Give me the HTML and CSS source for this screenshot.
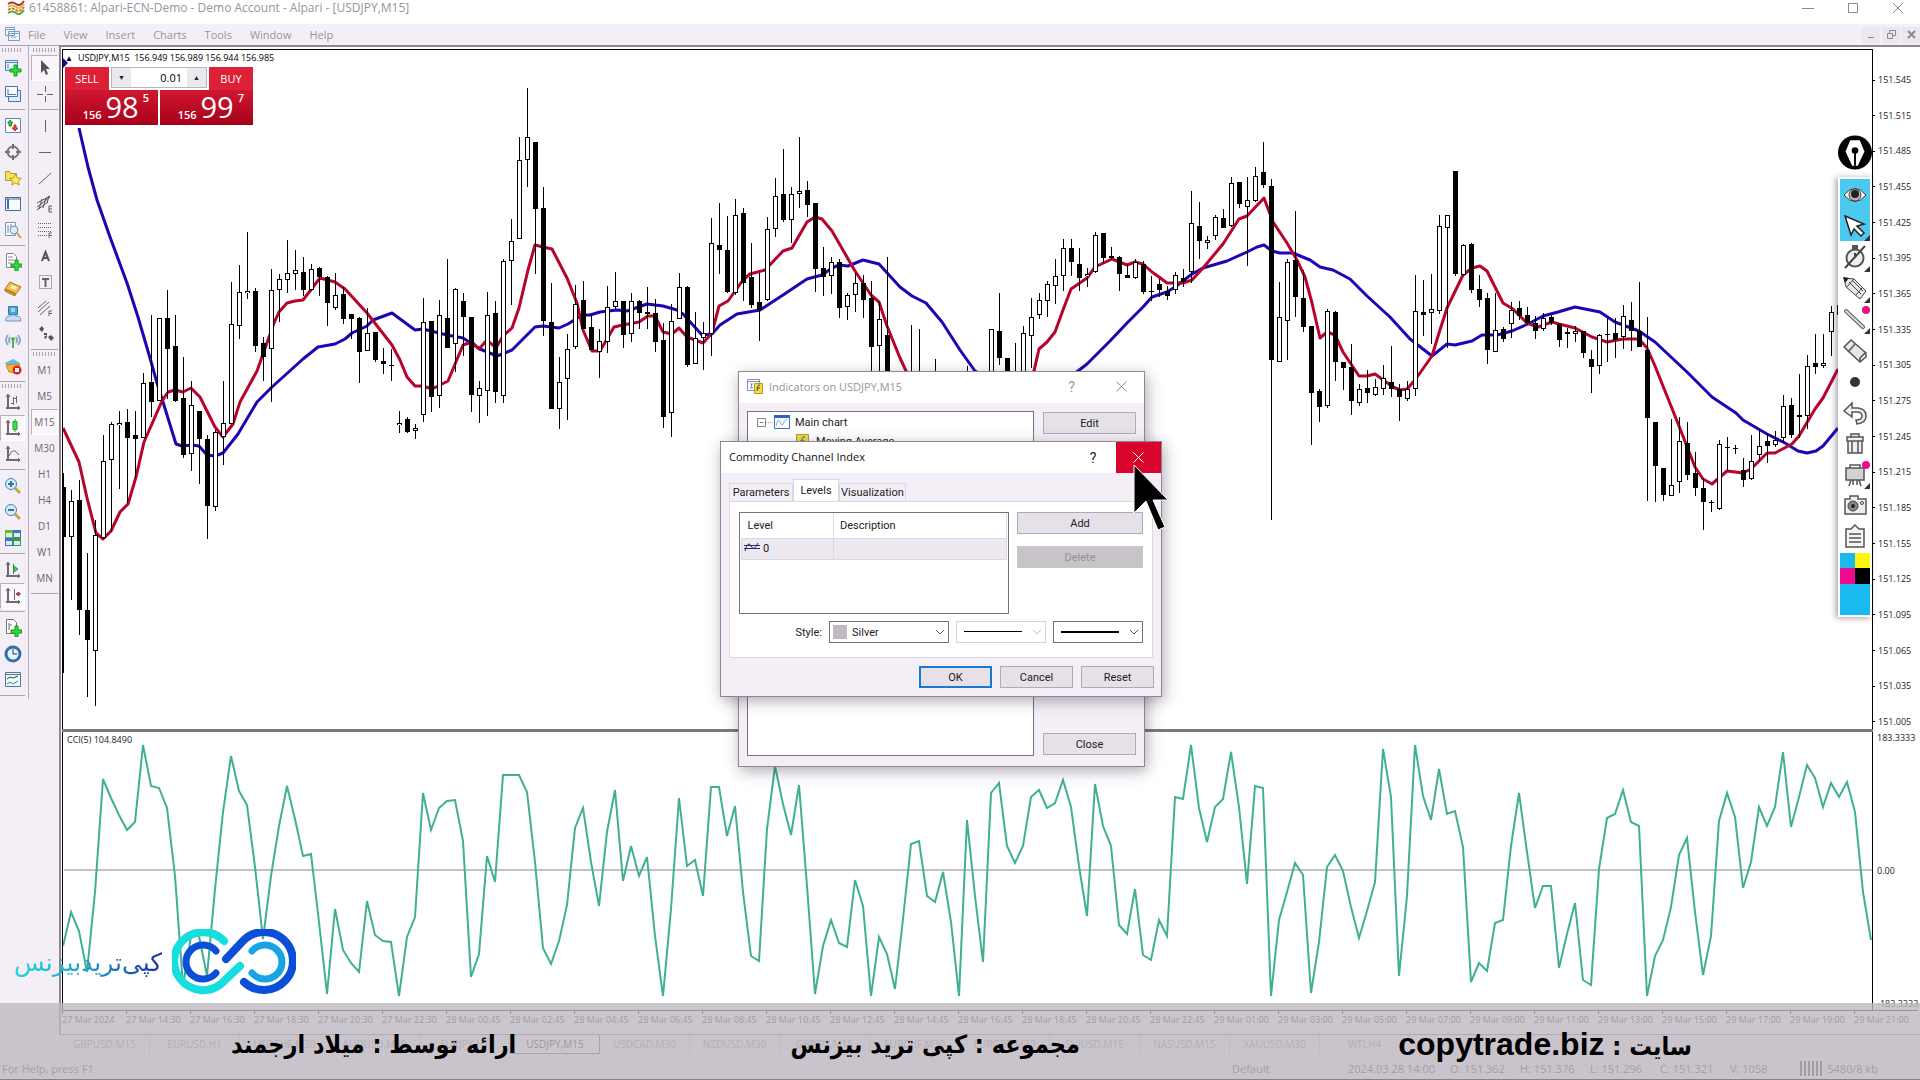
FILE: index.html
```
<!DOCTYPE html>
<html lang="en">
  <head>
    <meta charset="UTF-8" />
    <meta name="viewport" content="width=device-width, initial-scale=1.0" />
    <title>61458861: Alpari-ECN-Demo - Demo Account - Alpari - [USDJPY,M15]</title>
    <link rel="stylesheet" href="styles.css">
  </head>
  <body>
    <header class="title-bar">
      <svg class="app-icon" width="18" height="16" viewBox="0 0 18 16" fill="none" stroke-width="2"><path stroke="#a8322a" d="M1 4q4-3 8 0t8-3"/><path stroke="#e0b33a" d="M1 7q4-3 8 0t8-3"/><path stroke="#c8782c" d="M1 10q4-3 8 0t8-3" stroke-dasharray="3 1"/><path stroke="#5fa336" d="M1 13q4-3 8 0t8-3"/></svg>
      <h1>61458861: Alpari-ECN-Demo - Demo Account - Alpari - [USDJPY,M15]</h1>
      <div class="window-buttons">
        <button aria-label="Minimize"><svg width="12" height="12" viewBox="0 0 12 12"><path d="M0 6.500h12"/></svg></button>
        <button aria-label="Maximize"><svg width="12" height="12" viewBox="0 0 12 12"><path d="M1.500 1.500h9v9h-9z"/></svg></button>
        <button aria-label="Close"><svg width="12" height="12" viewBox="0 0 12 12"><path d="M1 1l10 10M11 1L1 11"/></svg></button>
      </div>
    </header>

    <nav class="menu-bar">
      <svg width="15" height="15" viewBox="0 0 15 15" fill="#eef4fb" stroke="#7f9dc4"><path d="M.5.5h9v8h-9zM3.500 4.500h11v9h-11z"/><path d="M.5 2.500h9M3.500 6.500h11M6 11l1.500-2 2 2 2-2" /></svg>
      <a href="#">File</a>
      <a href="#">View</a>
      <a href="#">Insert</a>
      <a href="#">Charts</a>
      <a href="#">Tools</a>
      <a href="#">Window</a>
      <a href="#">Help</a>
      <div class="child-buttons">
        <button aria-label="Minimize chart"><svg width="9" height="9" viewBox="0 0 9 9"><path d="M1 7.500h6"/></svg></button>
        <button aria-label="Restore chart"><svg width="9" height="9" viewBox="0 0 9 9"><path d="M.5 3.500h5v5h-5zM2.500 3V.5h6v5H6"/></svg></button>
        <button aria-label="Close chart"><svg width="9" height="9" viewBox="0 0 9 9"><path d="M1 1l7 7M8 1L1 8" stroke-width="2"/></svg></button>
      </div>
    </nav>

    <div class="workspace">
      <div class="toolbar">
        <div class="grip"></div>
        <button title="New chart"><svg viewBox="0 0 18 18"><path fill="#eaf3fc" stroke="#4d82bd" d="M1.500 1.500h12v10h-12z"/><path stroke="#4d82bd" d="M1 3.500h13M4 5v5"/><path fill="#2fdc3a" stroke="#149a1c" d="M10 6h3v4h4v3h-4v4h-3v-4H6v-3h4z"/></svg></button>
        <button title="Profiles"><svg viewBox="0 0 18 18"><path fill="#dfeafa" stroke="#4676b0" d="M4.500 5.500h12v11h-12z"/><path fill="#f7fbff" stroke="#4676b0" d="M1.500 1.500h12v10h-12z"/><path stroke="#4676b0" d="M4 9.500h8M4 4v6"/></svg></button>
        <hr>
        <button title="Market Watch"><svg viewBox="0 0 18 18"><path fill="#fff" stroke="#5b8bbd" d="M1.500 1.500h15v14h-15z"/><path fill="#3fb84a" stroke="#2b9338" d="M6 3l3 3-1.500 0v3H5V6H3.500z"/><path fill="#e04444" stroke="#c03030" d="M11 14l-3-3 2 0V8h2v3h2z"/></svg></button>
        <button title="Data Window"><svg viewBox="0 0 18 18" stroke="#77727a"><circle cx="9" cy="9" r="5.500" stroke-width="2"/><path stroke-width="2" d="M9 1v5M9 12v5M1 9h5M12 9h5"/></svg></button>
        <button title="Navigator"><svg viewBox="0 0 18 18" stroke="#b89a2a" fill="#f7e06a"><path d="M1.500 2.500h4l1 2h6v7h-11z"/><path fill="#fff04f" d="M11.500 5l1.800 4 4 .3-3 2.700 1 4-3.800-2-3.800 2 1-4-3-2.700 4-.3z"/></svg></button>
        <button title="Terminal"><svg viewBox="0 0 18 18"><path fill="#f6fbff" stroke="#3f6da5" d="M1.500 2.500h15v13h-15z"/><path stroke="#3f6da5" stroke-width="2" d="M4 4v10"/><path stroke="#3f6da5" d="M2 4h14"/></svg></button>
        <button title="Strategy Tester"><svg viewBox="0 0 18 18"><path fill="#fff" stroke="#7b93ae" d="M1.500 1.500h10v13h-10z"/><path stroke="#5b7ba3" d="M4 4v8M7 3v8M9 5v5"/><circle cx="10" cy="9" r="4" fill="#dcecf8" stroke="#6f8fb0"/><path stroke="#c9a545" stroke-width="2" d="M13 12l4 5"/></svg></button>
        <hr>
        <button title="New Order"><svg viewBox="0 0 18 18"><path fill="#fff" stroke="#8a868e" d="M2.500.5h7l3 3v11h-10z"/><path stroke="#8a868e" d="M4 4h5M4 7h6M4 10h4"/><path fill="#2fdc3a" stroke="#149a1c" d="M11 7h3v4h4v3h-4v4h-3v-4H7v-3h4z"/></svg></button>
        <button title="MetaEditor"><svg viewBox="0 0 18 18"><path fill="#f0c24a" stroke="#a87416" d="M6 3l11 5-6 8L1 10z"/><path fill="#d4932a" stroke="#a87416" d="M1 10l10 4v3L1 12z"/><path fill="#fff3c0" d="M8 6l5 2-2 3-5-2z"/></svg></button>
        <button title="Community"><svg viewBox="0 0 18 18"><path fill="#4ba5d8" stroke="#2f7fb4" d="M4.500 1.500h9v8h-9z"/><path stroke="#fff" d="M7 4h4M7 6h4"/><path fill="#c9dcf2" stroke="#6d93c0" d="M2 16q-1-5 4-5 3-3 6 0 5 0 5 5z"/></svg></button>
        <button title="Signals"><svg viewBox="0 0 18 18"><path stroke="#8eaac4" stroke-width="2" d="M4 4q-4 5 0 10M14 4q4 5 0 10M6 6q-2 3 0 6M12 6q2 3 0 6"/><circle cx="9" cy="8" r="2" fill="#50b35c"/><path stroke="#50b35c" stroke-width="2" d="M9 9v8"/></svg></button>
        <button title="AutoTrading"><svg viewBox="0 0 18 18"><path fill="#6ab8e6" d="M1 6l8-4 7 4-5 4H4z"/><path fill="#efb83a" stroke="#c48b20" d="M2 8l14-1-4 9-7-1z"/><circle cx="13" cy="13" r="4.500" fill="#d8281e"/><path fill="#fff" d="M11 11h4v4h-4z"/></svg></button>
        <hr>
        <div class="grip"></div>
        <button title="Bar Chart"><svg viewBox="0 0 18 18" stroke="#6f6a72"><path stroke-width="2" d="M4 2v14M2 15h14"/><path d="M2 4l2-3 2 3M14 13l2 2-2 2M9.500 4v8M7 10.500h2M10 5.500h3M12.500 3v7"/></svg></button>
        <button title="Candlesticks" class="pressed"><svg viewBox="0 0 18 18" stroke="#6f6a72"><path stroke-width="2" d="M4 2v14M2 15h14"/><path d="M2 4l2-3 2 3M14 13l2 2-2 2"/><path stroke="#1fa52d" d="M11 0v13"/><path fill="#3fe052" stroke="#1fa52d" d="M9 2.500h4v8H9z"/></svg></button>
        <button title="Line Chart"><svg viewBox="0 0 18 18" stroke="#6f6a72"><path stroke-width="2" d="M4 2v14M2 15h14"/><path d="M2 4l2-3 2 3M14 13l2 2-2 2M5 11q4-10 10-1"/></svg></button>
        <hr>
        <button title="Zoom In"><svg viewBox="0 0 18 18"><path stroke="#c9a545" stroke-width="3" d="M11 11l5 5"/><circle cx="7" cy="7" r="5.500" fill="#d8ecfa" stroke="#4a84b5"/><path stroke="#3572a8" stroke-width="2" d="M4 7h6M7 4v6"/></svg></button>
        <button title="Zoom Out"><svg viewBox="0 0 18 18"><path stroke="#c9a545" stroke-width="3" d="M11 11l5 5"/><circle cx="7" cy="7" r="5.500" fill="#d8ecfa" stroke="#4a84b5"/><path stroke="#3572a8" stroke-width="2" d="M4 7h6"/></svg></button>
        <button title="Tile Windows"><svg viewBox="0 0 18 18"><path fill="#6fb52f" d="M1 1h8v8H1z"/><path fill="#3f74c0" d="M9 1h8v8H9zM1 9h8v8H1z"/><path fill="#3f9a3a" d="M9 9h8v8H9z"/><path fill="#d8eef0" d="M2 4h6v4H2zM10 4h6v4h-6zM2 12h6v4H2zM10 12h6v4h-6z"/></svg></button>
        <hr>
        <button title="Auto Scroll"><svg viewBox="0 0 18 18" stroke="#6f6a72"><path stroke-width="2" d="M4 2v14M2 15h14"/><path d="M2 4l2-3 2 3M14 13l2 2-2 2M9.500 3v10"/><path fill="#3fd05a" stroke="#1fa52d" d="M10 5l4 3-4 3z"/></svg></button>
        <button title="Chart Shift" class="pressed"><svg viewBox="0 0 18 18" stroke="#6f6a72"><path stroke-width="2" d="M4 2v14M2 15h14"/><path d="M2 4l2-3 2 3M14 13l2 2-2 2M10.500 2v11"/><path fill="#a84a50" stroke="#8a3a40" d="M15 5l-3 2 3 2zM14 7h3"/></svg></button>
        <hr>
        <button title="Indicators"><svg viewBox="0 0 18 18"><path fill="#fff" stroke="#77727a" d="M2.500.5h7l3 3v11h-10z"/><path stroke="#77727a" d="M5 4v7M5 6h3"/><path fill="#2fdc3a" stroke="#149a1c" d="M11 7h3v4h4v3h-4v4h-3v-4H7v-3h4z"/></svg></button>
        <button title="Periods"><svg viewBox="0 0 18 18"><circle cx="9" cy="9" r="7" fill="#e8f4fd" stroke="#2f6fb0" stroke-width="3"/><path stroke="#334" d="M9 4v5h4"/></svg></button>
        <button title="Templates"><svg viewBox="0 0 18 18"><path fill="#eef8fb" stroke="#4f7894" d="M1.500 1.500h15v14h-15z"/><path stroke="#4f7894" d="M1 3.500h15"/><path stroke="#444" d="M3 8l3-2 3 1 5-2"/><path stroke="#2b9a6a" d="M3 13l3-2 3 2 5-3"/></svg></button>
        <hr>
      </div>

      <div class="toolbar">
        <div class="grip"></div>
        <button title="Cursor" class="pressed"><svg viewBox="0 0 18 18"><path fill="#555058" d="M5 1v13l3-3 2 5 2-1-2-5h4z"/></svg></button>
        <button title="Crosshair"><svg viewBox="0 0 18 18" stroke="#66616a"><path d="M9.500 1v6M9.500 11v6M1 9.500h6M11 9.500h6"/></svg></button>
        <hr>
        <button title="Vertical Line"><svg viewBox="0 0 18 18" stroke="#66616a"><path d="M9.500 3v12"/></svg></button>
        <button title="Horizontal Line"><svg viewBox="0 0 18 18" stroke="#66616a"><path d="M3 9.500h12"/></svg></button>
        <button title="Trendline"><svg viewBox="0 0 18 18" stroke="#66616a"><path d="M3 15L15 4"/></svg></button>
        <button title="Equidistant Channel"><svg viewBox="0 0 18 18" stroke="#55505a"><path d="M1 12L14 2M1 8L14 1M3 14L6 4M7 13L10 3M11 8l2-7M1 15L12 7"/><path d="M16 11h-3v6h3M13 14h3"/></svg></button>
        <button title="Fibonacci"><svg viewBox="0 0 18 18" stroke="#66616a"><path stroke-dasharray="1 1" d="M2 2.500h13M2 6.500h13M2 10.500h13M2 14.500h9"/><path d="M16 12h-3v5M13 14.500h3"/></svg></button>
        <button title="Text"><svg viewBox="0 0 18 18" stroke="#55505a" stroke-width="2"><path d="M6 14l3.500-9L13 14M7 11h5"/></svg></button>
        <button title="Text Label"><svg viewBox="0 0 18 18" stroke="#66616a"><path stroke-dasharray="1 1" d="M3.500 2.500h12v13h-12z"/><path stroke-width="2" d="M6 6h7M9.500 6v8"/></svg></button>
        <button title="Fibonacci Channel"><svg viewBox="0 0 18 18" stroke="#66616a"><path d="M2 9l8-7M2 13L13 3M4 16L14 7"/><path d="M16 12h-3v5M13 14.500h3"/></svg></button>
        <button title="Arrows"><svg viewBox="0 0 18 18" fill="#55505a"><path d="M3 4l3-3 2 3-2 3zM12 12l3-2 3 3-3 3zM8 8h3v2H8zM8 12l3-2v2l-2 2z"/></svg></button>
        <hr>
        <div class="grip"></div>
        <button>M1</button>
        <button>M5</button>
        <button class="pressed">M15</button>
        <button>M30</button>
        <button>H1</button>
        <button>H4</button>
        <button>D1</button>
        <button>W1</button>
        <button>MN</button>
        <hr>
      </div>

      <main class="chart-area">
        <div class="chart">
          <section class="plot price-plot">
            <svg id="price" viewBox="63 50 1809 679" preserveAspectRatio="none">
              <path fill="#1a00a8" d="M63 58l5 5-5 5z"/>
              <polyline class="ma slow" points="79,128 88,167 97,200 110,237 127,283 138,317 150,358 157,383 163,402 176,444 182,446 192,445 199,446 207,455 215,456 223,453 238,434 257,402 272,387 303,359 318,347 335,344 345,339 352,333 367,326 373,320 392,313 415,330 423,329 447,335 463,338 480,349 497,356 512,350 535,327 543,326 559,328 568,324 582,315 590,315 600,312 617,310 627,311 633,309 647,304 663,306 677,310 683,314 702,335 712,334 720,325 737,314 760,310 783,295 792,289 807,279 822,275 832,268 839,265 848,266 863,260 879,264 900,287 912,296 926,303 942,322 960,350 975,371 1028,400 1078,371 1087,364 1110,341 1127,323 1143,307 1152,297 1167,292 1175,287 1192,274 1203,268 1227,261 1247,252 1257,247 1264,245 1272,251 1280,253 1293,253 1310,260 1320,267 1333,270 1350,279 1367,296 1390,317 1410,339 1432,356 1447,344 1455,345 1472,341 1482,335 1497,335 1512,331 1530,323 1543,316 1558,312 1575,307 1600,312 1615,322 1639,331 1655,342 1687,372 1712,397 1736,413 1743,420 1767,434 1785,443 1798,451 1807,453 1816,451 1823,446 1838,428"/>
              <polyline class="ma fast" points="63,428 79,462 87,498 96,533 103,539 111,531 120,512 128,504 136,477 144,442 162,401 168,392 175,390 183,392 191,388 200,397 215,427 223,437 233,424 240,402 257,371 268,340 274,323 279,312 287,303 295,301 303,300 320,278 335,282 345,289 367,313 392,345 400,360 407,377 415,386 423,386 432,389 448,381 463,345 472,342 479,349 487,340 496,348 503,336 512,328 519,308 528,270 535,245 543,247 552,249 567,278 577,303 583,330 592,351 600,351 614,327 623,325 639,322 648,316 655,316 663,332 672,334 679,328 687,337 703,343 712,333 719,306 728,301 743,280 750,274 765,270 783,251 792,248 807,222 815,217 822,219 832,231 855,271 871,295 879,302 887,326 900,358 907,373 970,440 1034,371 1039,349 1047,342 1055,332 1063,310 1071,289 1087,278 1095,267 1112,259 1127,265 1135,262 1143,264 1152,272 1159,277 1167,283 1183,283 1192,280 1203,268 1223,244 1239,219 1247,216 1264,198 1273,222 1287,243 1297,260 1305,277 1312,303 1320,338 1327,332 1335,335 1343,352 1359,376 1367,376 1375,374 1393,387 1400,390 1407,389 1415,380 1432,356 1439,333 1447,308 1463,275 1472,268 1480,266 1487,271 1503,303 1513,309 1527,323 1538,327 1552,322 1559,324 1575,328 1592,337 1607,342 1623,339 1639,339 1647,348 1655,366 1679,426 1695,467 1703,479 1712,484 1727,471 1743,473 1751,469 1767,453 1775,453 1792,444 1799,436 1815,409 1823,398 1838,369"/>
            </svg>
            <div class="one-click">
              <p><span>▲</span>USDJPY,M15&nbsp; 156.949 156.989 156.944 156.985</p>
              <div class="trade">
                <button class="side">SELL</button>
                <div class="lot">
                  <button aria-label="Less">▼</button>
                  <input type="text" value="0.01" aria-label="Volume">
                  <button aria-label="More">▲</button>
                </div>
                <button class="side">BUY</button>
              </div>
              <div class="quotes">
                <div class="quote"><small>156</small><b>98</b><sup>5</sup></div>
                <div class="quote"><small>156</small><b>99</b><sup>7</sup></div>
              </div>
            </div>
          </section>
          <div class="price-axis" id="priceAxis"></div>
          <div class="splitter"></div>
          <section class="plot cci-plot">
            <svg id="cci" viewBox="63 733 1809 278" preserveAspectRatio="none">
              <path stroke="#c5c0c6" stroke-width="2" d="M64 871H1872"/>
            </svg>
            <p class="cci-name">CCI(5) 104.8490</p>
          </section>
          <div class="cci-axis">
            <span>183.3333</span>
            <span>0.00</span>
            <span>-183.3333</span>
          </div>
          <div class="time-axis" id="timeAxis"></div>
        </div>
        <nav class="chart-tabs">
          <a href="#">GBPUSD,M15</a>
          <a href="#">EURUSD,H1</a>
          <a href="#">USDCHF,M30</a>
          <a href="#">AUDUSD,M30</a>
          <a href="#">EURJPY,H1</a>
          <a href="#" class="active">USDJPY,M15</a>
          <a href="#">USDCAD,M30</a>
          <a href="#">NZDUSD,M30</a>
          <a href="#">GBPJPY,M15</a>
          <a href="#">EURCHF,M30</a>
          <a href="#">EURGBP,M30</a>
          <a href="#">SUIUSD,M15</a>
          <a href="#">NASUSD,M15</a>
          <a href="#">XAUUSD,M30</a>
          <a href="#">WTI,H4</a>
        </nav>
      </main>
    </div>

    <footer class="status-bar">
      <span class="help">For Help, press F1</span>
      <span class="profile">Default</span>
      <span class="date">2024.03.28 14:00</span>
      <span>O: 151.362</span>
      <span>H: 151.376</span>
      <span>L: 151.296</span>
      <span>C: 151.321</span>
      <span>V: 1058</span>
      <span class="traffic"><i></i>5480/8 kb</span>
    </footer>

    <!-- Indicators list -->
    <section class="dialog indicators">
      <header>
        <svg width="17" height="16" viewBox="0 0 17 16"><path fill="#fff" stroke="#7b93c0" d="M.5.5h12v11H.5z"/><path stroke="#7b93c0" d="M1 2.500h11M3 5h3M4.500 5v4M3 9h3"/><path fill="#f3dc4a" stroke="#b59a20" d="M7.500 4.500h8v10h-8z"/><path stroke="#554" fill="none" d="M13 6q-2-1-2 2l-1 4M9.500 9H13"/></svg>
        <h2>Indicators on USDJPY,M15</h2>
        <button class="help-button">?</button>
        <button class="close-button" aria-label="Close"><svg width="11" height="11" viewBox="0 0 11 11"><path d="M.5.5l10 10M10.500.5l-10 10"/></svg></button>
      </header>
      <div class="indicators-body">
        <ul class="tree">
          <li>
            <svg width="33" height="16" viewBox="0 0 33 16" fill="none"><path stroke="#8a868e" d="M.5 4.500h8v8h-8zM2.500 8.500h4"/><path stroke="#aaa" stroke-dasharray="1 1" d="M9 8.500h8"/><path fill="#fff" stroke="#3a70c8" d="M17.500 1.500h15v13h-15z"/><path stroke="#2f62c0" stroke-width="3" d="M17 2.500h16"/><path stroke="#7aa5e0" d="M19 12q2-9 4-4t3 2 4-5"/></svg>
            Main chart
          </li>
          <li class="child">
            <svg width="13" height="14" viewBox="0 0 13 14" fill="none"><path fill="#f0dc50" stroke="#b59a20" d="M.5.5h12v13H.5z"/><path stroke="#554" d="M9 3Q6 2 6 6l-1 5M4 7h5"/></svg>
            Moving Average
          </li>
        </ul>
        <div class="side-buttons">
          <button>Edit</button>
          <button>Close</button>
        </div>
      </div>
    </section>

    <!-- Indicator settings -->
    <section class="dialog settings">
      <header>
        <h2>Commodity Channel Index</h2>
        <button class="help-button">?</button>
        <button class="close-button" aria-label="Close"><svg width="11" height="11" viewBox="0 0 11 11"><path d="M.5.5l10 10M10.500.5l-10 10"/></svg></button>
      </header>
      <div class="tabs">
        <button>Parameters</button>
        <button class="active">Levels</button>
        <button>Visualization</button>
      </div>
      <div class="panel">
        <div class="levels">
          <div class="table-box">
            <table>
              <thead>
                <tr><th>Level</th><th>Description</th></tr>
              </thead>
              <tbody>
                <tr>
                  <td><svg width="16" height="9" viewBox="0 0 16 9" fill="none" stroke="#2a2870"><path d="M0 2.500h16M0 5.500h16M1 8q3-11 6-5t7-3"/></svg>0</td>
                  <td></td>
                </tr>
              </tbody>
            </table>
          </div>
          <div class="level-buttons">
            <button>Add</button>
            <button disabled>Delete</button>
          </div>
        </div>
        <div class="style-row">
          <label for="color">Style:</label>
          <select id="color" class="color"><option>Silver</option></select>
          <select class="line thin" aria-label="Line type" disabled><option></option></select>
          <select class="line thick" aria-label="Line width"><option></option></select>
        </div>
      </div>
      <div class="actions">
        <button class="default">OK</button>
        <button>Cancel</button>
        <button>Reset</button>
      </div>
    </section>

    <!-- Screen pen tools -->
    <aside class="pen-tools">
      <svg class="pen-logo" viewBox="0 0 36 36"><circle cx="18" cy="18" r="18"/><path fill="#fff" d="M13 5h10l5 12-7 15h-6L8 17z"/><circle cx="18" cy="16" r="3.500"/><path stroke="#000" stroke-width="2" d="M18 18v14"/></svg>
      <div class="pen-bar">
        <button class="on" title="Show"><svg viewBox="0 0 30 30"><path fill="#fff" stroke="#333" d="M4 15q11-13 22 0-11 13-22 0z"/><circle cx="15" cy="15" r="6" fill="#c8b0b4" stroke="#444"/><circle cx="15" cy="14" r="4" fill="#222"/></svg></button>
        <button class="on more" title="Pointer"><svg viewBox="0 0 30 30"><path fill="#fff" stroke="#222" stroke-width="1.500" d="M5 5l19 8-7 2 7 7-3 3-7-7-3 6z"/></svg></button>
        <button class="more" title="Timer"><svg viewBox="0 0 30 30"><circle cx="15" cy="16" r="8.500" fill="#eee" stroke="#555" stroke-width="2"/><path fill="#555" d="M12 3h6v4h-6z"/><path stroke="#444" stroke-width="2" d="M5 26L25 4M15 16v-5"/></svg></button>
        <button class="more" title="Pencil"><svg viewBox="0 0 30 30"><path fill="#e8e6ea" stroke="#444" d="M4 5l10 1 12 12-6 8L6 14z"/><path fill="#222" d="M3 4l6 1-4 5z"/><path stroke="#444" d="M14 6l-7 8M9 9l12 12M12 7l11 11M22 15l-6 7"/></svg></button>
        <button class="more dot" title="Line"><svg viewBox="0 0 30 30"><path stroke="#555" stroke-width="4" stroke-linecap="round" d="M6 7l17 16"/><path stroke="#ddd" stroke-width="2" stroke-linecap="round" d="M6 7l17 16"/></svg></button>
        <button title="Eraser"><svg viewBox="0 0 30 30"><path fill="#e8e6ea" stroke="#555" stroke-width="1.500" d="M4 12l7-7 15 13v4l-6 5z"/><path stroke="#555" stroke-width="1.500" d="M8 17l7-8M20 26v-3l6-6"/></svg></button>
        <button title="Size"><svg viewBox="0 0 30 30"><circle cx="15" cy="16" r="5" fill="#333"/></svg></button>
        <button title="Undo"><svg viewBox="0 0 30 30"><path fill="#f0eef2" stroke="#555" stroke-width="1.500" d="M4 14l8-8v5h6q8 1 8 8 0 7-9 8l-1-4q6 0 6-4t-5-4h-5v5z"/></svg></button>
        <button title="Clear"><svg viewBox="0 0 30 30"><path fill="#f0eef2" stroke="#555" stroke-width="1.500" d="M7 9h16v4H7zM11 9V6h8v3M8 13h14v12H8z"/><path stroke="#555" stroke-width="1.500" d="M12 13v12M18 13v12"/></svg></button>
        <button class="more dot" title="Board"><svg viewBox="0 0 30 30"><path fill="#d4d0d6" stroke="#555" stroke-width="1.500" d="M6 9h18v12H6z"/><path stroke="#555" stroke-width="1.500" d="M10 9V6h10v3M11 21l-2 6M13 21v5M17 21v5M19 21l2 6"/></svg></button>
        <button title="Screenshot"><svg viewBox="0 0 30 30"><path fill="#f0eef2" stroke="#555" stroke-width="1.500" d="M5 9h5V6h8v3h8v15H5z"/><circle cx="13" cy="16" r="5" fill="#888" stroke="#444"/><circle cx="13" cy="16" r="2" fill="#222"/><circle cx="22" cy="13" r="1.500" stroke="#444"/></svg></button>
        <button title="Clipboard"><svg viewBox="0 0 30 30"><path fill="#f6f4f7" stroke="#555" stroke-width="1.500" d="M6 8h5l4-4 4 4h5v18H6z"/><path stroke="#555" stroke-width="1.500" d="M9 13h12M9 17h12M9 21h12"/></svg></button>
        <div class="palette">
          <button class="cyan" aria-label="Cyan"></button>
          <button class="yellow" aria-label="Yellow"></button>
          <button class="magenta" aria-label="Magenta"></button>
          <button class="black" aria-label="Black"></button>
          <button class="current" aria-label="Current colour"></button>
        </div>
      </div>
    </aside>

    <!-- Video captions -->
    <div class="watermark" dir="rtl">
      <svg width="124" height="66" viewBox="0 0 124 66" fill="none" stroke-linecap="round">
        <path stroke="#17dede" stroke-width="8" d="M52 12A29 29 0 1 0 49 55L68 37"/>
        <path stroke="#0b4fd8" stroke-width="8" d="M54 30L70 13A29 29 0 1 1 72 53"/>
        <path stroke="#0b4fd8" stroke-width="7" d="M44 22A17 17 0 1 0 44 44"/>
        <path stroke="#18a4e4" stroke-width="7" d="M80 22A17 17 0 1 1 80 44"/>
      </svg>
      <span>کپی‌تریدبیزنس</span>
    </div>
    <div class="caption" dir="rtl">
      <p>سایت : <span>copytrade.biz</span></p>
      <p class="group">مجموعه : کپی ترید بیزنس</p>
      <p>ارائه توسط : میلاد ارجمند</p>
    </div>

    <svg class="pointer" viewBox="0 0 36 68"><path fill="#000" stroke="#fff" d="M1 1v48l12-12 12 29 7-3-12-27h15z"/></svg>

    <script src="chart.js"></script>
  </body>
</html>
```
FILE: styles.css
```
* {
  box-sizing: border-box;
  margin: 0;
  padding: 0;
}

body {
  font-family: "Open Sans", "Noto Sans", sans-serif;
  font-size: 11px;
  color: #222;
  background-color: #f4eff6;
  display: flex;
  flex-direction: column;
  height: 100vh;
  overflow: hidden;
  position: relative;
}

button {
  border: none;
  background: none;
  font-family: inherit;
  font-size: inherit;
  color: inherit;
}

a {
  color: inherit;
  text-decoration: none;
}

svg {
  display: block;
}

/* title and menu */

.title-bar {
  height: 24px;
  background-color: #fff;
  display: flex;
  align-items: flex-start;
  padding-left: 7px;
  gap: 4px;
  flex-shrink: 0;
}

.title-bar h1 {
  font-size: 12px;
  line-height: 16px;
  font-weight: normal;
  color: #99949b;
}

.window-buttons {
  margin-left: auto;
  display: flex;
}

.window-buttons button {
  width: 45px;
  height: 16px;
  display: flex;
  align-items: center;
  justify-content: center;
}

.window-buttons svg,
.child-buttons svg {
  fill: none;
  stroke: #8d888f;
}

.menu-bar {
  height: 21px;
  display: flex;
  align-items: center;
  padding-left: 5px;
  gap: 18px;
  color: #99949b;
  flex-shrink: 0;
}

.menu-bar > svg {
  margin-right: -10px;
}

.child-buttons {
  margin-left: auto;
  display: flex;
  gap: 2px;
}

.child-buttons button {
  width: 18px;
  height: 16px;
  display: flex;
  align-items: center;
  justify-content: center;
  background-color: #ece7ee;
}

/* side toolbars */

.workspace {
  flex: 1;
  min-height: 0;
  display: flex;
}

.toolbar {
  width: 29px;
  border-top: 1px solid #aaa5ad;
  border-right: 1px solid #b5b0b8;
  align-self: flex-start;
  padding: 2px 3px 0 0;
  display: flex;
  flex-direction: column;
  flex-shrink: 0;
}

.toolbar + .toolbar {
  width: 30px;
  padding-left: 2px;
  padding-right: 1px;
  border-right: none;
}

.toolbar button {
  height: 26px;
  display: flex;
  align-items: center;
  justify-content: center;
  color: #6a656d;
  font-size: 10px;
}

.toolbar button svg {
  width: 18px;
  height: 18px;
}

.toolbar svg:not([fill]) {
  fill: none;
}

.toolbar .pressed {
  background-color: #faf7fb;
  border: 1px solid #b5b0b8;
  border-right-color: #fff;
  border-bottom-color: #fff;
}

.toolbar hr {
  border: none;
  border-top: 1px solid #aaa5ad;
  margin: 2px 0 3px;
}

.grip {
  height: 4px;
  margin: 0 2px 3px;
  background-image: repeating-linear-gradient(90deg, #aaa5ad 0 1px, transparent 1px 3px);
}

.toolbar hr + .grip {
  margin-top: -1px;
  margin-bottom: 1px;
}

/* chart */

.chart-area {
  flex: 1;
  min-width: 0;
  display: flex;
  flex-direction: column;
}

.chart {
  flex: 1;
  min-height: 0;
  background-color: #fff;
  border-top: 2px solid #8d888f;
  border-left: 2px solid #8d888f;
  padding: 2px 0 0 1px;
  display: grid;
  grid-template-columns: 1fr 47px;
  grid-template-rows: 680fr 3px 278fr 24px;
}

.plot {
  position: relative;
  min-height: 0;
  border-left: 1px solid #000;
  border-right: 1px solid #000;
}

.price-plot {
  border-top: 1px solid #000;
}

.plot > svg {
  width: 100%;
  height: 100%;
}

.plot rect {
  shape-rendering: crispEdges;
}

.ma {
  fill: none;
  stroke-width: 3;
  stroke-linejoin: round;
}

.slow {
  stroke: #1c05b4;
}

.fast {
  stroke: #b8042c;
}

.splitter {
  grid-column: 1;
  background-color: #7d787f;
}

.price-axis {
  grid-column: 2;
  padding-top: 24px;
  display: flex;
  flex-direction: column;
  justify-content: space-between;
  font-size: 9px;
  line-height: 14px;
}

.price-axis span {
  display: flex;
  align-items: center;
  gap: 3px;
}

.price-axis span::before {
  content: "";
  width: 2px;
  height: 1px;
  background-color: #000;
}

.cci-plot {
  grid-column: 1;
}

.cci-name {
  position: absolute;
  left: 4px;
  top: 1px;
  font-size: 9px;
  line-height: 14px;
}

.cci-axis {
  grid-column: 2;
  display: flex;
  flex-direction: column;
  justify-content: space-between;
  padding-left: 4px;
  font-size: 9px;
  line-height: 12px;
}

.time-axis {
  grid-column: 1 / 3;
  border-top: 1px solid #000;
  margin-right: 2px;
  display: grid;
  grid-template-columns: repeat(29, 1fr);
  font-size: 9px;
  line-height: 18px;
}

.time-axis span {
  white-space: nowrap;
}

.time-axis span::before {
  content: "";
  display: block;
  width: 1px;
  height: 3px;
  margin-bottom: -3px;
  background-color: #000;
}

.one-click {
  position: absolute;
  left: 2px;
  top: 0;
  width: 188px;
}

.one-click p {
  font-size: 9px;
  line-height: 15px;
  white-space: nowrap;
  color: #000;
  margin-bottom: 2px;
}

.one-click p span {
  font-size: 8px;
  margin-right: 5px;
}

.trade {
  display: flex;
  justify-content: space-between;
}

.side {
  width: 44px;
  height: 23px;
  background-color: #dc2036;
  color: #fff;
}

.lot {
  width: 96px;
  height: 21px;
  display: flex;
  border: 1px solid #bbb6bd;
}

.lot button {
  width: 19px;
  background-color: #ebe8ee;
  font-size: 7px;
}

.lot input {
  flex: 1;
  min-width: 0;
  border: none;
  padding-right: 5px;
  text-align: right;
  font-family: inherit;
  font-size: 11px;
}

.quotes {
  display: flex;
  gap: 2px;
}

.quote {
  flex: 1;
  height: 35px;
  background-image: linear-gradient(#cf1830, #a8001a);
  color: #fff;
  display: flex;
  align-items: flex-end;
  justify-content: flex-end;
  gap: 4px;
  padding-right: 9px;
}

.quote small {
  font-size: 11px;
  font-weight: 600;
  line-height: 20px;
}

.quote b {
  font-size: 29px;
  font-weight: normal;
  line-height: 36px;
}

.quote sup {
  font-size: 11px;
  font-weight: 600;
  line-height: 16px;
  align-self: flex-start;
}

/* tabs and status bar */

.chart-tabs {
  height: 21px;
  border-top: 1px solid #77727a;
  padding-left: 1px;
  display: flex;
  color: #8d888f;
  font-size: 10px;
  line-height: 18px;
}

.chart-tabs a {
  width: 90px;
  text-align: center;
  border-right: 1px solid #c9c4cb;
  height: 19px;
}

.chart-tabs .active {
  color: #000;
  background-color: #fff;
  border: 1px solid #555;
  border-top: none;
}

.status-bar {
  height: 25px;
  display: flex;
  align-items: center;
  font-size: 11px;
  color: #333;
  padding: 1px 42px 0 2px;
  flex-shrink: 0;
}

.status-bar span {
  width: 70px;
  white-space: nowrap;
}

.status-bar .help {
  width: auto;
  flex: 1;
}

.status-bar .profile {
  width: 116px;
}

.status-bar .date {
  width: 102px;
}

.status-bar .traffic {
  width: 78px;
  display: flex;
  gap: 4px;
}

.traffic i {
  width: 24px;
  background-image: repeating-linear-gradient(90deg, #333 0 2px, transparent 2px 4px);
}

/* dialogs */

.dialog {
  position: absolute;
  background-color: #f4eff6;
  border: 1px solid #8d888f;
  box-shadow: 2px 4px 14px rgba(60, 40, 70, 0.4);
  font-family: Roboto, "Open Sans", sans-serif;
  display: flex;
  flex-direction: column;
}

.dialog header {
  background-color: #fff;
  display: flex;
  align-items: stretch;
  height: 31px;
}

.dialog h2 {
  font-family: "Open Sans", sans-serif;
  font-size: 11px;
  font-weight: normal;
  flex: 1;
  line-height: 30px;
}

.help-button,
.close-button {
  width: 45px;
  display: flex;
  align-items: center;
  justify-content: center;
  font-size: 14px;
}

.close-button svg {
  fill: none;
  stroke: #8d888f;
}

.indicators {
  left: 738px;
  top: 371px;
  width: 407px;
  height: 396px;
}

.indicators header {
  padding: 0 0 2px 8px;
  gap: 5px;
  align-items: center;
  color: #99949b;
}

.indicators-body {
  flex: 1;
  display: flex;
  gap: 9px;
  padding: 8px 8px 10px 8px;
}

.tree {
  flex: 1;
  border: 1px solid #77727a;
  background-color: #fff;
  list-style: none;
  padding: 0 9px;
}

.tree li {
  display: flex;
  align-items: center;
  gap: 5px;
  height: 20px;
}

.tree .child {
  height: 18px;
  gap: 7px;
  padding-left: 39px;
}

.side-buttons {
  width: 93px;
  display: flex;
  flex-direction: column;
  justify-content: space-between;
  padding: 1px 0;
}

.side-buttons button,
.level-buttons button,
.actions button {
  height: 22px;
  background-color: #e6e1e8;
  border: 1px solid #b0abb3;
}

.settings {
  left: 720px;
  top: 441px;
  width: 442px;
  height: 256px;
  padding-bottom: 8px;
}

.settings header {
  padding-left: 8px;
}

.settings h2 {
  color: #111;
}

.settings .help-button {
  width: 46px;
}

.settings .close-button {
  background-color: #d8042c;
}

.settings .close-button svg {
  stroke: #fff;
}

.tabs {
  display: flex;
  align-items: flex-end;
  height: 28px;
  padding: 0 8px;
}

.tabs button {
  width: 64px;
  height: 18px;
  border: 1px solid #ddd8df;
  border-bottom: none;
  white-space: nowrap;
}

.tabs button:last-child {
  width: 67px;
}

.tabs .active {
  width: 46px;
  height: 22px;
  background-color: #fff;
}

.panel {
  flex: 1;
  margin: 0 8px;
  padding: 10px 9px 14px;
  background-color: #fff;
  border: 1px solid #ddd8df;
  display: flex;
  flex-direction: column;
  justify-content: space-between;
}

.levels {
  display: flex;
  gap: 8px;
}

.table-box {
  flex: 1;
  height: 102px;
  border: 1px solid #77727a;
  padding: 1px;
}

.table-box table {
  width: 100%;
  border-collapse: collapse;
  table-layout: fixed;
}

.table-box th {
  height: 24px;
  padding-left: 6px;
  text-align: left;
  font-weight: normal;
  border-right: 1px solid #ddd8df;
}

.table-box th:first-child {
  width: 92px;
}

.table-box td {
  height: 21px;
  padding-left: 2px;
  background-color: #eee9f0;
  border: 1px solid #ddd8df;
}

.table-box td svg {
  display: inline-block;
  margin-right: 3px;
}

.level-buttons {
  width: 126px;
  display: flex;
  flex-direction: column;
  gap: 12px;
}

.level-buttons button:disabled {
  background-color: #c9c4ca;
  border-color: #c9c4ca;
  color: #938e96;
}

.style-row {
  display: flex;
  align-items: center;
  justify-content: flex-end;
  gap: 7px;
}

.style-row select {
  appearance: none;
  height: 22px;
  width: 90px;
  border: 1px solid #77727a;
  border-radius: 0;
  background-color: #fff;
  background-repeat: no-repeat;
  font-family: inherit;
  font-size: inherit;
  color: #222;
}

.style-row .color {
  width: 120px;
  padding-left: 22px;
  background-image: url("data:image/svg+xml,%3Csvg xmlns='http://www.w3.org/2000/svg' width='8' height='5' fill='none' stroke='%23555'%3E%3Cpath d='M0 0l4 4 4-4'/%3E%3C/svg%3E"), linear-gradient(#c0bac2, #c0bac2);
  background-position: right 4px center, 3px 3px;
  background-size: 8px 5px, 14px 14px;
}

.style-row .line {
  background-image: url("data:image/svg+xml,%3Csvg xmlns='http://www.w3.org/2000/svg' width='8' height='5' fill='none' stroke='%23555'%3E%3Cpath d='M0 0l4 4 4-4'/%3E%3C/svg%3E"), linear-gradient(#000, #000);
  background-position: right 4px center, 7px 9px;
  background-size: 8px 5px, 58px 2px;
}

.style-row .thin {
  border-color: #d5d0d8;
  opacity: 1;
  background-image: url("data:image/svg+xml,%3Csvg xmlns='http://www.w3.org/2000/svg' width='8' height='5' fill='none' stroke='%23bbb'%3E%3Cpath d='M0 0l4 4 4-4'/%3E%3C/svg%3E"), linear-gradient(#000, #000);
  background-size: 8px 5px, 58px 1px;
}

.actions {
  display: flex;
  justify-content: flex-end;
  gap: 8px;
  padding: 8px 7px 0 0;
}

.actions button {
  width: 73px;
}

.actions .default {
  border: 2px solid #1a78d0;
}

/* pen tools */

.pen-tools {
  position: absolute;
  right: 48px;
  top: 135px;
  width: 34px;
  display: flex;
  flex-direction: column;
  gap: 7px;
}

.pen-logo {
  width: 34px;
  height: 35px;
}

.pen-bar {
  border: 2px solid #fff;
  background-color: #fff;
  box-shadow: -2px 1px 6px rgba(60, 40, 70, 0.45);
  display: flex;
  flex-direction: column;
}

.pen-bar > button {
  position: relative;
  height: 31px;
}

.pen-bar > button svg {
  width: 30px;
  height: 30px;
  fill: none;
}

.pen-bar .on {
  background-color: #4cc9ee;
}

.more::after {
  content: "";
  position: absolute;
  right: 0;
  bottom: 0;
  border-left: 6px solid transparent;
  border-bottom: 6px solid #333;
}

.dot::before {
  content: "";
  position: absolute;
  right: 0;
  top: 3px;
  width: 8px;
  height: 8px;
  border-radius: 4px;
  background-color: #ee0a8c;
}

.palette {
  margin-top: 2px;
  display: grid;
  grid-template-columns: 1fr 1fr;
  grid-template-rows: 15px 16px 31px;
}

.cyan,
.current {
  background-color: #19baf0;
}

.yellow {
  background-color: #fdf800;
}

.magenta {
  background-color: #ee0a8c;
}

.black {
  background-color: #000;
}

.current {
  grid-column: 1 / 3;
}

/* captions over everything */

.watermark {
  position: absolute;
  left: 14px;
  bottom: 85px;
  display: flex;
  align-items: center;
  gap: 10px;
}

.watermark span {
  font-family: "DejaVu Sans", sans-serif;
  font-size: 25px;
  white-space: nowrap;
  color: transparent;
  background-image: linear-gradient(90deg, #20d8d8, #1f9ad0 50%, #1a30a0);
  background-clip: text;
}

.caption {
  position: absolute;
  left: 0;
  right: 0;
  bottom: 0;
  height: 77px;
  padding: 6px 228px 0 231px;
  background-color: rgba(190, 184, 192, 0.8);
  border-bottom: 1px solid #88838a;
  display: flex;
  align-items: center;
  justify-content: space-between;
  font-family: "DejaVu Sans Condensed", "DejaVu Sans", sans-serif;
  font-size: 25px;
  font-weight: bold;
  color: #000;
  white-space: nowrap;
}

.caption span {
  font-family: "Liberation Sans", sans-serif;
  font-size: 32px;
}

.caption .group {
  padding-right: 44px;
}

.pointer {
  position: absolute;
  left: 1133px;
  top: 464px;
  width: 36px;
  height: 68px;
}
```
FILE: chart.js
```
const SVG_NS = "http://www.w3.org/2000/svg";
const FIRST_X = 63;
const STEP = 8;

// high, body top, body bottom, low, up (1) or down (0); 0 = no bar
const candles = [
  [473,487,537,673,0],[490,501,537,600,1],[480,500,610,635,0],[553,610,640,697,0],[520,535,651,706,1],
  [435,461,538,539,1],[422,424,460,532,1],[411,423,425,489,1],[409,422,438,503,0],[411,435,439,478,0],
  [373,383,438,438,1],[315,382,402,417,0],[318,318,401,401,1],[290,318,349,399,0],[315,346,401,402,0],
  [357,398,455,458,0],[381,405,454,471,1],[411,411,439,484,0],[435,439,506,539,0],[430,432,507,511,1],
  [381,423,437,465,1],[282,324,424,424,1],[265,292,326,339,1],[232,291,293,299,1],[288,291,346,352,0],
  [337,343,357,381,0],[269,290,349,402,1],[274,279,290,322,1],[240,273,280,293,1],[250,270,274,290,1],
  [257,272,290,296,0],[264,269,290,291,1],[267,268,277,296,0],[276,277,303,326,0],[273,295,308,310,1],
  [287,294,319,324,0],[314,314,319,339,0],[317,318,352,383,0],[308,333,351,351,1],[332,332,360,362,0],
  [348,361,364,374,0],[349,365,366,381,0],[411,423,425,433,1],[417,419,432,433,0],[424,428,431,439,1],
  [298,322,415,422,1],[321,321,397,412,0],[300,315,396,408,1],[259,318,348,348,0],[288,289,344,372,1],
  [293,301,317,356,0],[317,317,395,412,0],[381,388,396,423,1],[292,315,391,416,1],[301,313,392,403,0],
  [259,261,396,403,1],[219,241,261,305,1],[137,160,239,239,1],[88,137,160,187,1],[142,142,209,274,0],
  [187,208,321,336,0],[283,322,409,409,0],[357,382,409,429,1],[334,349,379,420,1],[285,304,347,349,1],
  [281,300,329,329,0],[315,327,350,350,0],[329,341,352,378,1],[286,307,342,353,1],[272,301,307,310,1],
  [301,301,335,348,0],[293,301,334,342,1],[300,301,313,329,0],[287,312,314,329,0],[299,313,342,352,0],
  [323,340,417,428,0],[304,321,413,437,1],[273,287,319,319,1],[286,287,365,367,0],[312,338,364,364,1],
  [322,333,338,370,1],[218,243,334,356,1],[203,245,250,274,0],[216,250,292,293,0],[199,215,293,295,1],
  [208,213,283,301,0],[243,277,305,308,0],[273,302,310,341,0],[217,229,300,301,1],[178,196,229,237,1],
  [149,194,220,222,0],[187,194,220,243,1],[137,191,194,208,1],[181,190,205,217,0],[203,203,269,292,0],
  [247,268,277,296,0],[257,262,276,294,1],[259,262,308,318,0],[293,295,307,320,1],[273,283,295,312,1],
  [275,283,300,318,0],[281,298,347,380,0],[302,319,346,380,1],[257,335,400,410,0],0,
  0,[325,380,400,410,1],[329,380,400,410,0],0,[359,380,400,410,1],
  0,0,0,[366,380,400,410,0],0,
  0,[329,329,380,390,1],[293,331,358,365,0],[358,358,390,395,0],[343,375,390,395,1],
  [326,333,380,390,1],[298,317,336,368,1],[293,300,315,319,1],[281,284,301,317,1],[259,276,286,304,1],
  [239,248,276,291,1],[239,248,262,276,0],[248,264,278,291,0],[268,274,276,287,1],[232,235,272,273,1],
  [233,233,258,263,0],[247,256,258,260,0],[256,257,274,291,0],[264,275,278,278,0],[259,262,278,279,1],
  [261,264,292,294,0],[276,291,292,301,0],[279,284,290,297,0],[286,291,296,300,0],[272,275,290,294,1],
  [269,278,282,287,0],[191,223,272,283,1],[202,226,241,259,0],[236,240,243,249,1],[215,217,236,240,1],
  [209,218,228,228,0],[177,183,226,227,1],[182,182,204,208,0],[177,200,207,266,1],[167,176,201,202,1],
  [142,172,185,188,0],[179,186,360,520,0],[282,317,362,362,1],[259,262,321,360,1],[211,260,297,317,0],
  [270,298,327,332,0],[326,326,393,445,0],[389,391,407,422,0],[309,311,406,408,1],[311,312,362,381,0],
  [362,362,368,390,0],[344,367,401,415,0],[384,389,403,406,1],[370,388,393,403,0],[379,387,395,396,1],
  [365,378,389,395,1],[346,382,389,397,0],[384,389,397,421,0],[381,389,399,401,1],[275,311,389,396,1],
  [280,312,315,336,0],[274,309,313,344,1],[215,226,311,314,1],[215,215,228,348,1],[171,171,274,276,0],
  [244,245,275,275,1],[243,244,290,293,0],[275,289,300,307,0],[293,298,350,364,0],[293,330,352,352,1],
  [327,329,339,342,0],[302,310,324,338,1],[301,308,316,320,0],[307,315,323,325,0],[316,323,331,339,0],
  [313,318,329,331,1],[315,317,323,325,0],[323,324,340,347,0],[328,332,334,348,0],[326,331,334,342,1],
  [331,331,353,358,0],[350,359,367,393,0],[334,335,366,374,1],[317,334,335,362,0],[318,333,340,358,0],
  [305,316,337,349,1],[302,320,331,351,0],[282,331,347,347,0],[317,350,418,501,0],[422,422,466,502,0],
  [468,468,495,501,0],[419,485,496,496,1],[417,441,482,493,1],[422,443,475,480,0],[452,473,488,496,0],
  [478,488,502,530,0],[500,502,503,512,0],[440,444,509,510,1],[437,447,448,470,0],[445,448,449,454,0],
  [458,470,480,487,0],[435,461,479,480,1],[429,446,455,461,1],[433,441,446,463,0],[431,440,445,447,1],
  [395,406,438,443,1],[398,405,435,438,0],[374,415,417,438,0],[355,366,416,429,1],[334,363,367,374,0],
  [334,363,366,368,1],[306,312,332,356,1],[305,305,315,315,0]
];

// CCI(5) line, three units to a pixel, counted down from the pane top
const cci = [
  650,550,607,730,490,150,207,257,303,280,
  47,172,177,238,440,770,620,620,740,480,
  250,80,187,227,415,630,440,290,172,270,
  382,375,580,795,540,662,702,730,515,617,
  637,640,800,625,565,193,302,237,216,212,
  335,745,675,380,460,138,138,138,190,400,
  658,706,635,527,298,236,400,530,310,184,
  456,350,440,383,620,800,540,207,412,394,
  500,175,175,322,232,490,680,696,300,112,
  225,318,168,470,795,650,572,643,653,452,
  530,802,625,675,780,570,344,337,500,518,
  430,580,800,273,500,700,192,162,352,403,
  352,204,184,238,223,152,235,410,562,165,
  290,350,588,615,480,678,693,572,622,204,
  209,47,238,338,233,211,68,235,466,172,
  177,802,572,490,403,437,793,640,415,378,
  427,535,627,545,460,60,205,740,500,47,
  200,273,120,255,247,355,760,702,727,583,
  573,350,193,370,537,470,470,717,615,523,
  752,768,420,267,255,184,280,290,802,682,
  633,535,378,327,550,737,620,275,193,265,
  478,400,235,292,235,70,295,205,107,147,
  233,162,205,158,250,490,632
];

function add(parent, name, attrs) {
  const el = document.createElementNS(SVG_NS, name);
  for (const key in attrs) {
    el.setAttribute(key, attrs[key]);
  }
  parent.appendChild(el);
}

function drawCandles() {
  const svg = document.getElementById("price");
  candles.forEach((bar, i) => {
    if (!bar) return;
    const [high, top, bottom, low, up] = bar;
    const x = FIRST_X + i * STEP;
    add(svg, "rect", { x: x, y: high, width: 1, height: low - high });
    add(svg, "rect", { x: x - 2, y: top, width: 5, height: Math.max(bottom - top, 1) });
    if (up) {
      add(svg, "rect", { x: x - 1, y: top + 1, width: 3, height: Math.max(bottom - top - 2, 1), fill: "#fff" });
    }
  });
}

function drawCci() {
  const points = cci.map((v, i) => `${FIRST_X + i * STEP},${Math.round(730 + v / 3)}`);
  add(document.getElementById("cci"), "polyline", {
    points: points.join(" "),
    fill: "none",
    stroke: "#3fb094",
    "stroke-width": 2
  });
}

function addLabel(id, text) {
  const span = document.createElement("span");
  span.textContent = text;
  document.getElementById(id).appendChild(span);
}

function drawAxes() {
  for (let p = 151545; p >= 151005; p -= 30) {
    addLabel("priceAxis", (p / 1000).toFixed(3));
  }

  const pad = (n) => String(n).padStart(2, "0");
  addLabel("timeAxis", "27 Mar 2024");
  for (let h = 14; h <= 22; h += 2) addLabel("timeAxis", `27 Mar ${h}:30`);
  for (let h = 0; h <= 22; h += 2) addLabel("timeAxis", `28 Mar ${pad(h)}:45`);
  for (let h = 1; h <= 21; h += 2) addLabel("timeAxis", `29 Mar ${pad(h)}:00`);
}

drawCandles();
drawCci();
drawAxes();
```
